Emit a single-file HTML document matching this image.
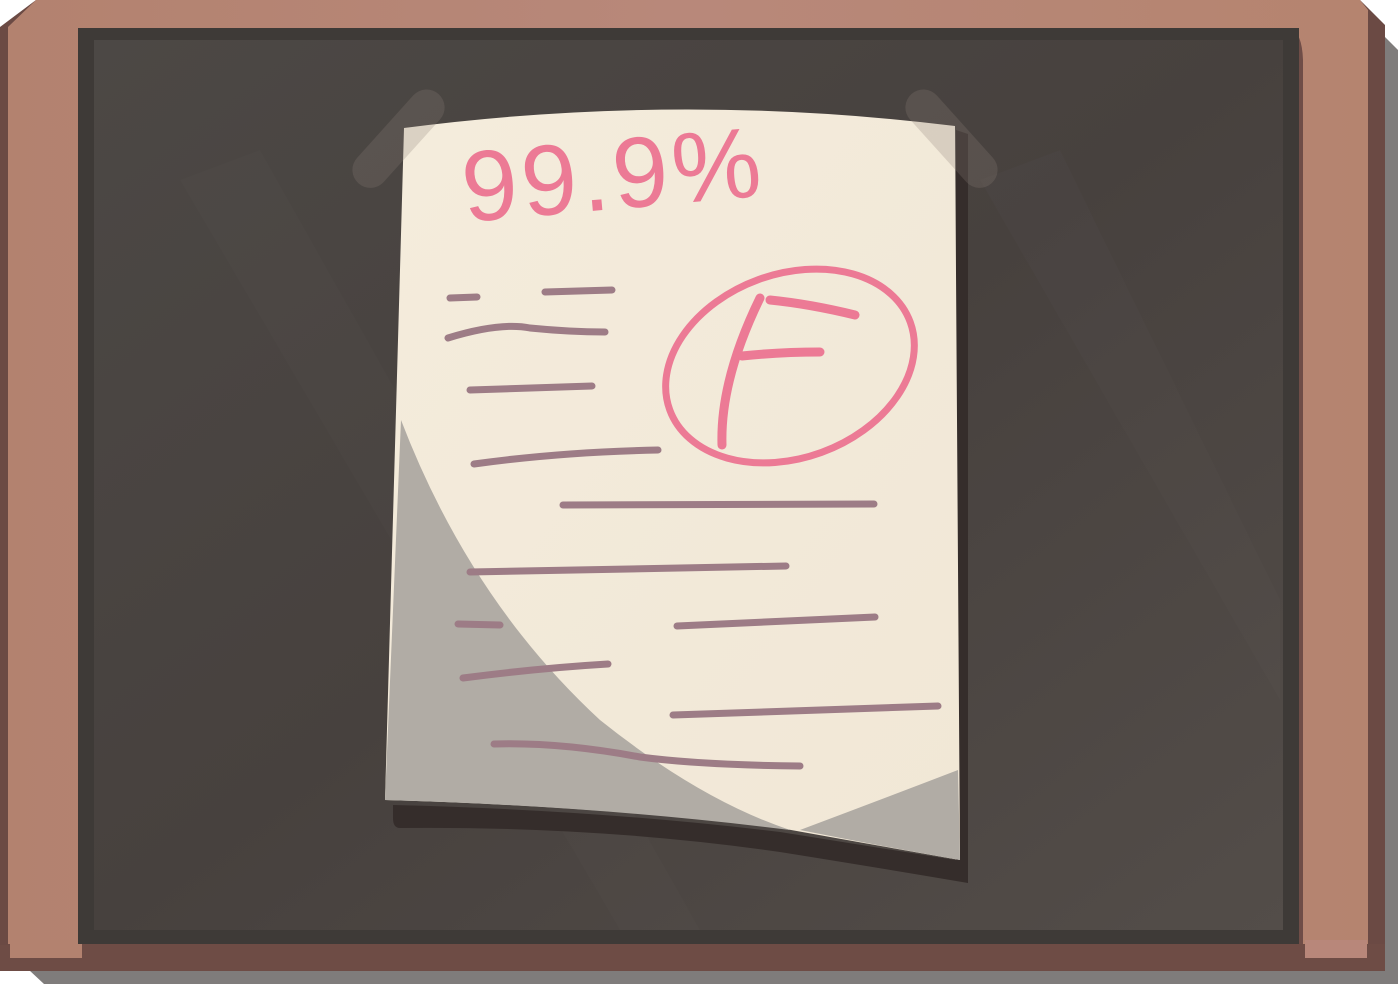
<!DOCTYPE html>
<html><head><meta charset="utf-8"><style>
html,body{margin:0;padding:0;width:1398px;height:984px;overflow:hidden;background:#fff}
svg{display:block}
</style></head><body>
<svg width="1398" height="984" viewBox="0 0 1398 984" xmlns="http://www.w3.org/2000/svg">
<defs>
<linearGradient id="wood" x1="0" y1="0" x2="1" y2="0">
<stop offset="0" stop-color="#b3826f"/><stop offset="0.5" stop-color="#b8887a"/><stop offset="1" stop-color="#b5846f"/>
</linearGradient>
<linearGradient id="board" x1="0" y1="0" x2="1" y2="1">
<stop offset="0" stop-color="#4c4845"/><stop offset="0.5" stop-color="#47413e"/><stop offset="1" stop-color="#534d49"/>
</linearGradient>
<linearGradient id="paper" x1="0" y1="0" x2="1" y2="1">
<stop offset="0" stop-color="#f4ecdc"/><stop offset="1" stop-color="#f1e7d6"/>
</linearGradient>
</defs>
<polygon points="50,14 1362,14 1398,50 1398,984 44,984 14,956 14,40" fill="#7f7c7b"/>
<polygon points="36,0 1360,0 1385,25 1385,950 1362,971 40,971 0,945 0,27" fill="#6b4a44"/>
<polygon points="36,0 1360,0 1368,10 1368,944 1365,960 1300,960 16,958 8,945 8,27" fill="url(#wood)"/>
<rect x="0" y="944" width="1385" height="27" fill="#6e4c45"/>
<polygon points="0,27 8,27 8,945 0,945" fill="#6b4a44"/>
<rect x="10" y="940" width="72" height="18" fill="#b3826f"/>
<rect x="1305" y="940" width="62" height="18" fill="#b8877a"/>
<path d="M1290,28 Q1302,32 1303,60 L1303,944 L1290,944 Z" fill="#6f4d47"/>
<rect x="78" y="28" width="1221" height="916" fill="#3e3a37"/>
<rect x="94" y="40" width="1189" height="890" fill="url(#board)"/>
<polygon points="180,180 260,150 700,930 620,930" fill="#ffffff" opacity="0.012"/>
<polygon points="980,180 1060,150 1280,600 1280,700" fill="#ffffff" opacity="0.015"/>
<path d="M393,805 Q600,810 780,832 Q880,848 968,862 L968,883 Q880,868 780,852 Q600,826 400,828 Q393,828 393,818 Z" fill="#352d2b"/>
<path d="M956,130 L968,134 L968,883 L956,870 Z" fill="#352d2b"/>
<path d="M404,128 Q680,92 955,126 L960,860 Q880,846 780,828 Q600,806 385,800 Z" fill="url(#paper)"/>
<path d="M401,420 Q470,600 600,720 Q700,800 790,830 Q600,806 385,800 Z" fill="#b1aca5"/>
<path d="M800,830 Q880,800 958,770 L960,860 Q880,846 800,830 Z" fill="#b1aca5"/>
<rect x="340" y="120" width="120" height="36" rx="18" transform="rotate(-48 400 140)" fill="#8a7e76" opacity="0.25"/>
<rect x="890" y="120" width="120" height="36" rx="18" transform="rotate(48 950 140)" fill="#8a7e76" opacity="0.25"/>
<g stroke="#9d7c86" stroke-width="7" stroke-linecap="round" fill="none">
<path d="M450,298 L477,297"/>
<path d="M545,292 L612,290"/>
<path d="M448,338 Q500,322 530,328 Q570,332 605,332"/>
<path d="M470,390 L592,386"/>
<path d="M474,464 Q560,452 658,450"/>
<path d="M563,505 L874,504"/>
<path d="M470,572 L786,566"/>
<path d="M677,626 L875,617"/>
<path d="M458,624 L500,625"/>
<path d="M463,678 Q540,668 608,664"/>
<path d="M673,715 L938,706"/>
<path d="M494,744 Q560,742 640,757 Q700,765 800,766"/>
</g>
<text x="465" y="222" font-family="Liberation Sans, sans-serif" font-size="100" fill="#ec7a95" transform="rotate(-5 465 222)" letter-spacing="4">99.9%</text>
<ellipse cx="790" cy="366" rx="128" ry="92" transform="rotate(-20 790 366)" fill="none" stroke="#ec7a95" stroke-width="7"/>
<g stroke="#ec7a95" stroke-width="9" stroke-linecap="round" fill="none">
<path d="M760,298 Q720,380 722,445"/>
<path d="M770,300 Q810,304 855,315"/>
<path d="M742,356 Q780,352 820,352"/>
</g>
</svg>
</body></html>
